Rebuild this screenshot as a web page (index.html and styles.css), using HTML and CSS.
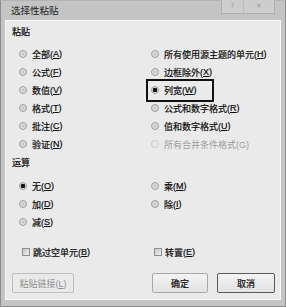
FILE: index.html
```html
<!DOCTYPE html>
<html>
<head>
    <meta charset="UTF-8">
    <title>选择性粘贴</title>
    <link rel="stylesheet" href="styles.css">
</head>
<body>
    <div class="dialog">
        <div class="titlebar">
            <span class="title">选择性粘贴</span>
            <div class="caption">
                <span class="cap-help">?</span>
                <span class="cap-close">✕</span>
            </div>
        </div>

        <div class="client">
            <!-- 粘贴 -->
            <div class="group-label">粘贴</div>
            <div class="options paste">
                <div class="item"><span class="radio"></span>全部(<u>A</u>)</div>
                <div class="item"><span class="radio"></span>所有使用源主题的单元(<u>H</u>)</div>
                <div class="item"><span class="radio"></span>公式(<u>F</u>)</div>
                <div class="item"><span class="radio"></span>边框除外(<u>X</u>)</div>
                <div class="item"><span class="radio"></span>数值(<u>V</u>)</div>
                <div class="item marked"><span class="radio on"></span>列宽(<u>W</u>)</div>
                <div class="item"><span class="radio"></span>格式(<u>T</u>)</div>
                <div class="item"><span class="radio"></span>公式和数字格式(<u>R</u>)</div>
                <div class="item"><span class="radio"></span>批注(<u>C</u>)</div>
                <div class="item"><span class="radio"></span>值和数字格式(<u>U</u>)</div>
                <div class="item"><span class="radio"></span>验证(<u>N</u>)</div>
                <div class="item disabled"><span class="radio"></span>所有合并条件格式(G)</div>
            </div>

            <!-- 运算 -->
            <div class="group-label op-label">运算</div>
            <div class="options op">
                <div class="item"><span class="radio on"></span>无(<u>O</u>)</div>
                <div class="item"><span class="radio"></span>乘(<u>M</u>)</div>
                <div class="item"><span class="radio"></span>加(<u>D</u>)</div>
                <div class="item"><span class="radio"></span>除(<u>I</u>)</div>
                <div class="item"><span class="radio"></span>减(<u>S</u>)</div>
            </div>

            <div class="options checks">
                <div class="item"><span class="check"></span>跳过空单元(<u>B</u>)</div>
                <div class="item"><span class="check"></span>转置(<u>E</u>)</div>
            </div>

            <div class="buttons">
                <button class="btn link" disabled>粘贴链接(<u>L</u>)</button>
                <div class="btn-group">
                    <button class="btn ok">确定</button>
                    <button class="btn cancel">取消</button>
                </div>
            </div>
        </div>
    </div>
</body>
</html>
```

FILE: styles.css
```css
body {
    margin: 0;
    font-family: "Liberation Sans", "Noto Sans CJK SC", sans-serif;
    font-size: 9px;
    color: #0a0a0a;
    text-autospace: no-autospace;
}
.dialog {
    width: 286px;
    height: 307px;
    box-sizing: border-box;
    background: #c4c4c4;
    border: 1px solid #8c8c8c;
    border-top-color: #b3b3b3;
    padding: 0 4px 6px 4px;
    display: flex;
    flex-direction: column;
}

/* Title bar */
.titlebar {
    height: 19px;
    display: flex;
    align-items: flex-start;
}
.title {
    margin-left: 6px;
    line-height: 19px;
    font-size: 9.5px;
    color: #222;
}
.caption {
    margin-left: auto;
    margin-right: 6px;
    margin-top: -1px;
    height: 13px;
    display: flex;
    border: 1px solid #b0b0b0;
    border-top: none;
    background: #cdcdcd;
    color: #9a9a9a;
    font-family: "DejaVu Sans", sans-serif;
    font-size: 7px;
    line-height: 12px;
}
.cap-help {
    width: 21px;
    text-align: center;
    border-right: 1px solid #bdbdbd;
}
.cap-close {
    width: 30px;
    text-align: center;
}

/* Client area */
.client {
    flex: 1;
    background: #eaeaea;
    border: 1px solid #f7f7f7;
    padding: 2px 5px 0 6px;
    display: flex;
    flex-direction: column;
}
.group-label {
    height: 18px;
    line-height: 18px;
    -webkit-text-stroke: 0.2px #0a0a0a;
}
.op-label {
    margin-top: 1px;
}
.options {
    display: grid;
    grid-template-columns: 132px 1fr;
    grid-auto-rows: 18px;
    padding-left: 7px;
}
.paste {
    margin-top: 4px;
}
.op {
    margin-top: 5px;
}
.checks {
    margin-top: 12px;
}
.item {
    display: flex;
    align-items: center;
    white-space: nowrap;
    -webkit-text-stroke: 0.2px #0a0a0a;
}
.item > span:first-child {
    margin-right: 5px;
}
.item u {
    text-underline-offset: 1px;
}
.item.disabled {
    color: #9c9c9c;
    -webkit-text-stroke: 0;
}
.item.marked {
    position: relative;
}
/* annotation frame drawn on the screenshot */
.item.marked::after {
    content: "";
    position: absolute;
    left: -5px;
    top: -2px;
    width: 68px;
    height: 23px;
    border: 2px solid #111;
    box-sizing: border-box;
}

.radio {
    width: 8px;
    height: 8px;
    flex: none;
    box-sizing: border-box;
    border-radius: 50%;
    border: 1px solid #9c9c9c;
    background: radial-gradient(circle, #c4c4c4 0, #d8d8d8 2px, #e8e8e8 4px);
}
.radio.on {
    border-color: #9a9a9a;
    background: radial-gradient(circle, #111 0, #111 2px, #e4e4e4 2.6px);
}
.item.disabled .radio {
    border-color: #cccccc;
    background: #eaeaea;
}
.check {
    width: 8px;
    height: 8px;
    flex: none;
    box-sizing: border-box;
    margin-left: 3px;
    border: 1px solid #8e8e8e;
    background: linear-gradient(135deg, #c8c8c8, #f0f0f0);
}
.item > span.check {
    margin-right: 3px;
}

/* Buttons */
.buttons {
    margin-top: 12px;
    display: flex;
}
.btn-group {
    margin-left: auto;
    display: flex;
    gap: 9px;
}
.btn {
    height: 20px;
    padding: 0;
    font-family: inherit;
    font-size: 9px;
    color: #0a0a0a;
    -webkit-text-stroke: 0.2px #0a0a0a;
    background: linear-gradient(#f4f4f4, #e2e2e2);
    border: 1px solid #a9a9a9;
    border-radius: 2px;
}
.btn.link {
    width: 62px;
    color: #8e8e8e;
    -webkit-text-stroke: 0;
    border-color: #bdbdbd;
    background: #eaeaea;
}
.btn.ok {
    width: 56px;
}
.btn.cancel {
    width: 58px;
    border-color: #5a5a5a;
}
```
